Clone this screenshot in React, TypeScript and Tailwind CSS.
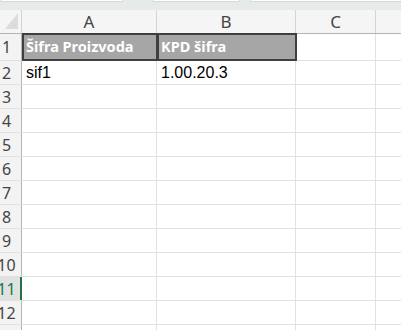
import React from 'react'

const rows = [3, 4, 5, 6, 7, 8, 9, 10, 11, 12, 13]

function RowHead({ n, active }: { n: number; active?: boolean }) {
  return (
    <div
      className={`relative w-[22px] shrink-0 border-r border-[#b4b4b4] flex items-center ${
        active ? 'bg-[#e1e1e1] text-[#0f7b4a]' : 'bg-[#f3f3f3] text-[#444]'
      }`}
    >
      <div className="w-[13px] text-[16px] leading-none whitespace-nowrap flex justify-center">
        {n}
      </div>
      {active && <div className="absolute right-[-1px] top-0 bottom-0 w-[2px] bg-[#217346]" />}
    </div>
  )
}

function Cells({ a, b }: { a?: string; b?: string }) {
  return (
    <>
      <div className="w-[135px] shrink-0 border-r border-[#e1e1e1] flex items-center pl-[4px] text-[16px] text-black font-['Liberation_Sans',Arial,sans-serif]">
        {a}
      </div>
      <div className="w-[139px] shrink-0 border-r border-[#e1e1e1] flex items-center pl-[4px] text-[16px] text-black font-['Liberation_Sans',Arial,sans-serif]">
        {b}
      </div>
      <div className="w-[80px] shrink-0 border-r border-[#e1e1e1]" />
      <div className="flex-1" />
    </>
  )
}

export default function App() {
  return (
    <div className="w-[401px] h-[330px] overflow-hidden bg-white font-['Noto_Sans','Open_Sans',sans-serif]">
      {/* formula bar remnants */}
      <div className="h-[10px] bg-[#e6ebe9] flex items-start">
        <div className="w-[123px] h-[2px] bg-white border-b border-x border-[#d6d6d6] rounded-b-[2px]" />
        <div className="w-[29px]" />
        <div className="w-[88px] h-[2px] bg-white border-b border-x border-[#d6d6d6] rounded-b-[2px]" />
        <div className="w-[10px]" />
        <div className="flex-1 h-[2px] bg-white border-b border-l border-[#d6d6d6] rounded-bl-[2px]" />
      </div>

      {/* column headers */}
      <div className="h-[24px] flex border-b border-[#b4b4b4] bg-[#f5f5f5] text-[#444] text-[17px]">
        <div className="w-[22px] shrink-0 border-r border-[#d4d4d4] relative">
          <svg className="absolute left-0 top-0" width="21" height="23" viewBox="0 0 21 23">
            <polygon points="18,3 18,19 5,19" fill="#dcdcdc" />
          </svg>
        </div>
        <div className="w-[135px] shrink-0 border-r border-[#d4d4d4] flex items-center justify-center">A</div>
        <div className="w-[139px] shrink-0 border-r border-[#d4d4d4] flex items-center justify-center">B</div>
        <div className="w-[80px] shrink-0 border-r border-[#d4d4d4] flex items-center justify-center">C</div>
        <div className="flex-1" />
      </div>

      {/* row 1 */}
      <div className="h-[27px] flex border-b border-[#e1e1e1]">
        <RowHead n={1} />
        <div className="relative w-[135px] shrink-0 bg-[#a6a6a6] flex items-center pl-[4px] text-white font-bold text-[14.5px]">
          Šifra Proizvoda
          <div className="absolute left-0 -top-px -right-px -bottom-px border-2 border-[#3f3f3f]" />
        </div>
        <div className="relative w-[139px] shrink-0 bg-[#a6a6a6] flex items-center pl-[4px] text-white font-bold text-[14.5px]">
          KPD šifra
          <div className="absolute left-0 -top-px -right-px -bottom-px border-2 border-[#3f3f3f]" />
        </div>
        <div className="w-[80px] shrink-0 border-r border-[#e1e1e1]" />
        <div className="flex-1" />
      </div>

      {/* row 2 */}
      <div className="h-[24px] flex border-b border-[#e1e1e1]">
        <RowHead n={2} />
        <Cells a="sif1" b="1.00.20.3" />
      </div>

      {rows.map((n) => (
        <div key={n} className="h-[24px] flex border-b border-[#e1e1e1]">
          <RowHead n={n} active={n === 11} />
          <Cells />
        </div>
      ))}
    </div>
  )
}
